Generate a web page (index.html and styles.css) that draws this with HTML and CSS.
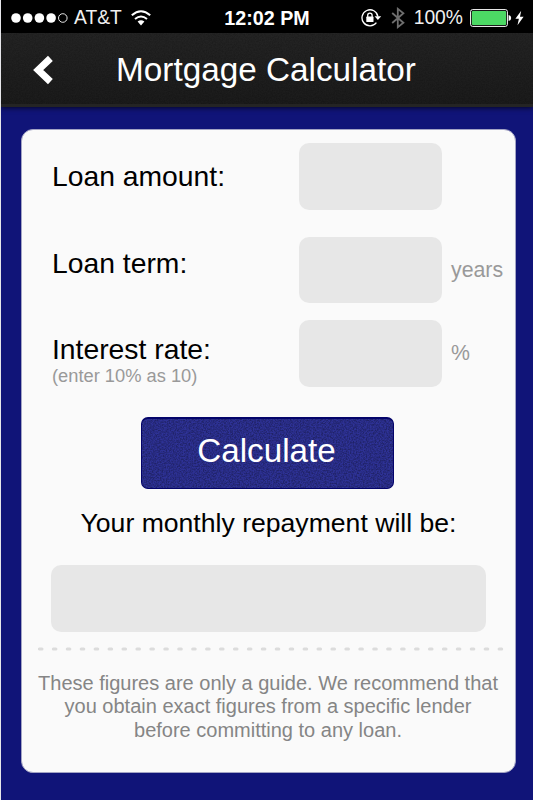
FILE: index.html
```html
<!DOCTYPE html>
<html lang="en">
<head>
    <meta charset="UTF-8">
    <meta name="viewport" content="width=device-width, initial-scale=1.0">
    <title>Mortgage Calculator</title>
    <link rel="stylesheet" href="styles.css">
</head>
<body>
    <div class="status-bar">
        <div class="status-left">
            <svg class="signal" width="58" height="12" viewBox="0 0 58 12">
                <g fill="#fff">
                    <circle cx="5" cy="6" r="4.8"/>
                    <circle cx="16.7" cy="6" r="4.8"/>
                    <circle cx="28.4" cy="6" r="4.8"/>
                    <circle cx="40.1" cy="6" r="4.8"/>
                </g>
                <circle cx="51.8" cy="6" r="4.3" fill="none" stroke="#fff" stroke-width="0.9"/>
            </svg>
            <span class="carrier">AT&amp;T</span>
            <svg class="wifi" width="20" height="16" viewBox="0 0 20 16">
                <path d="M0.8 5.2Q10 -2.8 19.2 5.2M4 8.9Q10 4 16 8.9" fill="none" stroke="#fff" stroke-width="2"/>
                <path d="M6.6 11.6Q10 8.9 13.4 11.6L10 15.4Z" fill="#fff"/>
            </svg>
        </div>
        <div class="time">12:02 PM</div>
        <div class="status-right">
            <svg class="lock" width="21" height="18" viewBox="0 0 21 18">
                <path d="M15.4 13.6A8 8 0 1 1 16.9 7.6" fill="none" stroke="#fff" stroke-width="1.3"/>
                <path d="M13.6 7.2H20.2L16.9 11Z" fill="#fff"/>
                <path d="M6.7 8V6.3a2.2 2.2 0 0 1 4.4 0V8" fill="none" stroke="#fff" stroke-width="1.3"/>
                <rect x="5.3" y="7.6" width="7.2" height="5.4" rx="0.6" fill="#fff"/>
            </svg>
            <svg class="bluetooth" width="14" height="22" viewBox="0 0 14 22">
                <path d="M1.2 6L12.4 15.8L6.8 20.2V1.8L12.4 6.2L1.2 16" fill="none" stroke="#6e6e6e" stroke-width="1.8"/>
            </svg>
            <span class="percent">100%</span>
            <svg class="battery" width="42" height="18" viewBox="0 0 42 18">
                <rect x="0.6" y="0.6" width="36.8" height="16.8" rx="2" fill="none" stroke="#fff" stroke-width="1"/>
                <rect x="1.9" y="1.9" width="34.2" height="14.2" rx="1" fill="#4cd964"/>
                <path d="M38.6 6Q41.2 6.4 41.2 9Q41.2 11.6 38.6 12Z" fill="#fff"/>
            </svg>
            <svg class="bolt" width="9" height="16" viewBox="0 0 9 16">
                <path d="M6.2 0.8L0.4 8.8H3.9L2.5 15.2L8.6 6.8H5Z" fill="#fff"/>
            </svg>
        </div>
    </div>

    <div class="header">
        <svg class="noise" width="100%" height="100%">
            <filter id="grain">
                <feTurbulence type="fractalNoise" baseFrequency="0.7" numOctaves="2"/>
                <feColorMatrix type="matrix" values="0 0 0 0 0  0 0 0 0 0  0 0 0 0 0  0 2.4 0 0 -0.8"/>
            </filter>
            <rect width="100%" height="100%" filter="url(#grain)"/>
        </svg>
        <svg class="back" width="22" height="32" viewBox="0 0 22 32">
            <path d="M17.4 4.4L5.2 16L17.4 27.6" fill="none" stroke="#fff" stroke-width="7"/>
        </svg>
        <h1>Mortgage Calculator</h1>
    </div>

    <div class="card">
        <div class="row row-amount">
            <label for="amount">Loan amount:</label>
            <input type="text" id="amount">
        </div>
        <div class="row row-term">
            <label for="term">Loan term:</label>
            <input type="text" id="term">
            <span class="unit">years</span>
        </div>
        <div class="row row-rate">
            <label for="rate">Interest rate:<small>(enter 10% as 10)</small></label>
            <input type="text" id="rate">
            <span class="unit">%</span>
        </div>
        <button type="button" onclick="calculate()">
            <svg class="noise" width="100%" height="100%">
                <rect width="100%" height="100%" filter="url(#grain)"/>
            </svg>
            <span>Calculate</span>
        </button>
        <p class="result-label">Your monthly repayment will be:</p>
        <output id="result"></output>
        <svg class="divider" width="466" height="4">
            <line x1="1.4" y1="2" x2="465" y2="2"/>
        </svg>
        <p class="disclaimer">These figures are only a guide. We recommend that<br>you obtain exact figures from a specific lender<br>before committing to any loan.</p>
    </div>
    <script src="script.js"></script>
</body>
</html>
```
FILE: styles.css
```css
* {
    box-sizing: border-box;
}
body {
    margin: 0;
    height: 800px;
    overflow: hidden;
    font-family: "Liberation Sans", Arial, sans-serif;
    background-color: #101478;
    border-left: 1px solid #e6e6ea;
}
svg {
    display: block;
    flex: none;
}
.status-bar {
    display: grid;
    grid-template-columns: 1fr auto 1fr;
    align-items: center;
    height: 33px;
    padding: 1px 9px 0 9px;
    background-color: #000;
    color: #fff;
    font-size: 19.3px;
    line-height: 32px;
}
.status-left, .status-right {
    display: flex;
    align-items: center;
}
.status-left {
    padding-left: 1px;
}
.status-right {
    justify-content: flex-end;
}
.carrier {
    margin: 0 9px 0 5px;
    padding-top: 1px;
    color: #f0f0f0;
}
.time {
    padding: 1px 0 0;
    font-size: 19.7px;
    font-weight: bold;
}
.percent {
    padding-top: 1px;
    color: #f0f0f0;
}
.bluetooth {
    margin: 0 9px 0 9px;
}
.battery {
    margin-left: 7px;
}
.bolt {
    margin-left: 3px;
}
.header {
    position: relative;
    display: flex;
    align-items: center;
    justify-content: center;
    height: 74px;
    padding: 3px 2px 0 0;
    background: linear-gradient(#242424, #1b1b1b);
    border-bottom: 3px solid #242424;
    box-shadow: 0 1px 5px rgba(0, 0, 0, 0.7);
}
.noise {
    position: absolute;
    top: 0;
    left: 0;
    opacity: 0.15;
}
.back {
    position: absolute;
    left: 32px;
    top: 21px;
}
h1 {
    position: relative;
    margin: 0;
    font-size: 33.3px;
    font-weight: normal;
    line-height: 38px;
    color: #fff;
}
.card {
    width: 495px;
    height: 644px;
    margin: 22px 0 0 20px;
    padding: 13px 0 0 15px;
    background-color: #fafafa;
    border: 1px solid #a3a4c4;
    border-radius: 12px;
    font-size: 28.3px;
}
.row {
    display: grid;
    grid-template-columns: 247px 143px auto;
    justify-content: start;
    height: 67px;
    padding-left: 15px;
}
.row-term {
    margin-top: 27px;
}
.row-rate {
    margin-top: 16px;
}
label {
    padding-top: 17px;
    line-height: 32px;
    color: #000;
}
.row-term label {
    padding-top: 10px;
}
.row-rate label {
    padding-top: 13px;
}
label small {
    display: block;
    font-size: 18.3px;
    line-height: 21px;
    color: #999;
}
input {
    width: 143px;
    height: 67px;
    padding: 0 12px;
    border: none;
    border-radius: 10px;
    background-color: #e7e7e7;
    font: inherit;
}
.row-term input {
    height: 66px;
}
.unit {
    margin-left: 9px;
    font-size: 21.3px;
    line-height: 66px;
    color: #999;
}
button {
    position: relative;
    display: block;
    width: 253px;
    height: 72px;
    margin: 30px 0 0 104px;
    padding: 0 2px 5px 0;
    overflow: hidden;
    border: 1px solid #04046a;
    border-top-width: 2px;
    border-radius: 7px;
    background-color: #2e3296;
    color: #fff;
    font-family: inherit;
    font-size: 33.2px;
    cursor: pointer;
}
button .noise {
    opacity: 0.3;
}
button span {
    position: relative;
}
.result-label {
    margin: 18px 0 0;
    padding-right: 15px;
    font-size: 26.6px;
    line-height: 32px;
    text-align: center;
    color: #000;
}
output {
    display: block;
    width: 435px;
    height: 67px;
    margin: 26px 0 0 14px;
    border-radius: 10px;
    background-color: #e7e7e7;
    line-height: 67px;
    text-align: center;
}
.divider {
    margin: 15px 0 0 1px;
}
.divider line {
    stroke: #dcdcdc;
    stroke-width: 3;
    stroke-linecap: round;
    stroke-dasharray: 2.6 11.33;
}
.disclaimer {
    margin: 21px 0 0;
    padding-right: 16px;
    font-size: 20px;
    line-height: 23.3px;
    text-align: center;
    white-space: nowrap;
    color: #858585;
}
```
FILE: script.js
```js
function calculate() {
    const amount = parseFloat(document.getElementById('amount').value);
    const months = parseFloat(document.getElementById('term').value) * 12;
    const rate = parseFloat(document.getElementById('rate').value) / 100 / 12;
    let payment = amount / months;
    if (rate > 0) {
        payment = amount * rate / (1 - Math.pow(1 + rate, -months));
    }
    document.getElementById('result').textContent = isFinite(payment) ? payment.toFixed(2) : '';
}
```
